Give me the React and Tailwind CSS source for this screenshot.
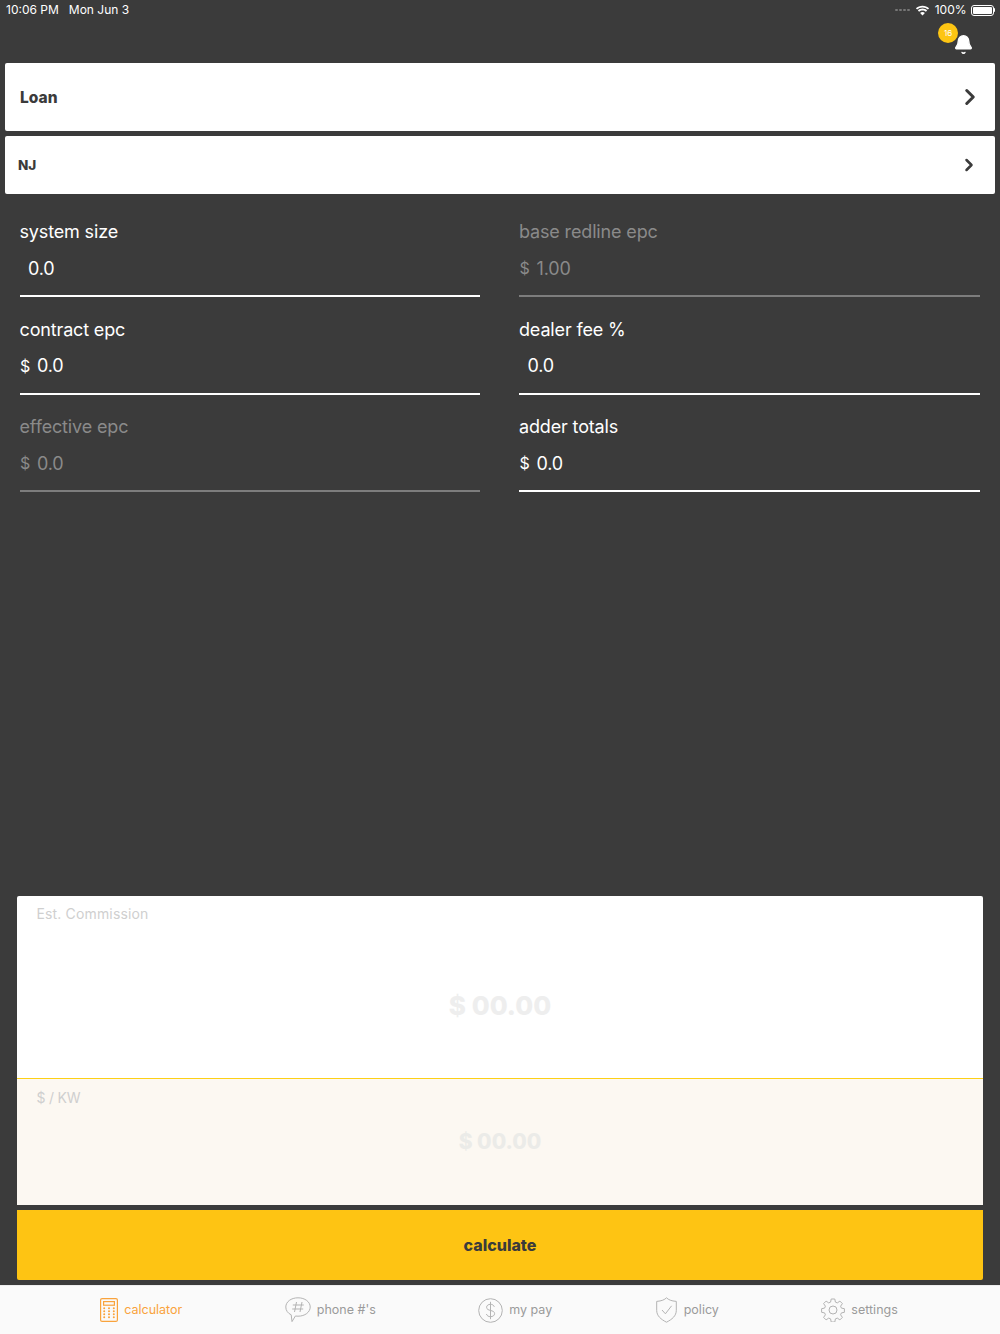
import React from 'react';
import { Bell, ChevronRight } from 'lucide-react';

const FIELDS = [
  { label: 'system size', value: '0.0' },
  { label: 'base redline epc', value: '1.00', prefix: '$', disabled: true },
  { label: 'contract epc', value: '0.0', prefix: '$' },
  { label: 'dealer fee %', value: '0.0' },
  { label: 'effective epc', value: '0.0', prefix: '$', disabled: true },
  { label: 'adder totals', value: '0.0', prefix: '$' },
];

const CalculatorIcon = () => (
  <svg width="18" height="24" viewBox="0 0 18 24" fill="none" stroke="#f9a33c" strokeWidth="1.2">
    <rect x="0.6" y="0.6" width="16.8" height="22.8" rx="1.5" />
    <rect x="3.6" y="3.6" width="10.8" height="3.6" />
    <g fill="#f9a33c" stroke="none">
      {[4.2, 9, 13.8].map((x) =>
        [10.2, 13.2, 16.2, 19.2].map((y) => <circle key={`${x}-${y}`} cx={x} cy={y} r="1" />)
      )}
    </g>
  </svg>
);

const PhoneIcon = () => (
  <svg width="26" height="26" viewBox="0 0 26 26" fill="none" stroke="#b3b3b3" strokeWidth="1">
    <path d="M13 0.8c6.900 0 12.200 4 12.200 9.200s-5.300 9.200-12.200 9.200c-.9 0-1.800-.1-2.600-.2l-3.400 5.600-.8-6.800C2.800 16.300.8 13.400.8 10 .8 4.800 6.100.8 13 .8z" />
    <path d="M11.500 5l-2 10M17 5l-2 10M7.800 8h11M7.200 12h11" />
  </svg>
);

const PayIcon = () => (
  <svg width="25" height="25" viewBox="0 0 25 25" fill="none" stroke="#b3b3b3" strokeWidth="1">
    <circle cx="12.500" cy="12.500" r="11.800" />
    <path d="M16.300 8.800c-.5-1.600-2-2.500-3.800-2.500-2.200 0-3.900 1.200-3.900 3 0 4.200 8 2.200 8 6.300 0 1.900-1.800 3.100-4.100 3.100-2 0-3.600-1-4.100-2.700M12.500 3.800v17.400" />
  </svg>
);

const PolicyIcon = () => (
  <svg width="23" height="26" viewBox="0 0 23 26" fill="none" stroke="#b3b3b3" strokeWidth="1">
    <path d="M11.500 .8c2 2 4.800 3.200 9.800 3.600v9c0 5.500-4.300 9-9.800 11.800C6 22.400 1.700 18.900 1.700 13.400v-9C6.700 4 9.500 2.800 11.500 .8z" />
    <path d="M7 13l3.400 3.800 6.200-8" />
  </svg>
);

const SettingsIcon = () => (
  <svg width="24" height="24" viewBox="0 0 24 24" fill="none" stroke="#b3b3b3" strokeWidth="1">
    <circle cx="12" cy="12" r="4" />
    <path d="M10.200 1h3.600l.6 3.100 1.900.8 2.600-1.800 2.500 2.500-1.800 2.600.8 1.900 3 .6v3.600l-3 .6-.8 1.900 1.800 2.600-2.500 2.500-2.600-1.800-1.900.8-.6 3.100h-3.600l-.6-3.100-1.900-.8-2.600 1.800-2.500-2.500 1.800-2.600-.8-1.900-3-.6v-3.600l3-.6.800-1.900-1.800-2.600 2.500-2.500 2.600 1.800 1.900-.8z" />
  </svg>
);

const WifiIcon = () => (
  <svg width="15" height="11" viewBox="0 0 15 11" fill="white">
    <path d="M7.500 2.500c2.100 0 4 .8 5.400 2.100l1.200-1.300C12.400 1.700 10.100.7 7.500.7S2.600 1.700.9 3.300l1.200 1.300C3.500 3.300 5.400 2.500 7.500 2.500z" />
    <path d="M7.500 5.400c1.300 0 2.500.5 3.400 1.300l1.200-1.300C10.900 4.300 9.300 3.600 7.500 3.600S4.100 4.300 2.900 5.400l1.200 1.300c.9-.8 2.100-1.300 3.400-1.300z" />
    <path d="M7.500 10.500l2.400-2.600c-.6-.6-1.500-1-2.400-1s-1.800.4-2.400 1z" />
  </svg>
);

const TabItem = ({ icon, label, active }) => (
  <div className={`flex items-center gap-[6px] text-[12.5px] ${active ? 'text-[#f9a33c]' : 'text-[#9b9b9b]'}`}>
    {icon}
    <span>{label}</span>
  </div>
);

const Field = ({ label, value, prefix, disabled }) => (
  <div className={`h-[97.5px] ${disabled ? 'text-[#8a8a8a]' : 'text-white'}`}>
    <div className="pt-[14px] text-[18px] leading-[24px]">{label}</div>
    <div className="mt-[11px] flex h-[26px] items-center text-[18px]">
      {prefix ? <span className="ml-[0.5px] w-[17px] text-[16px]">{prefix}</span> : <span className="w-[8.5px]" />}
      <span>{value}</span>
    </div>
    <div className={`mt-[14px] h-[2px] ${disabled ? 'bg-[#7d7d7d]' : 'bg-white'}`} />
  </div>
);

export default function App() {
  return (
    <div className="flex h-[1334px] w-[1000px] flex-col overflow-hidden bg-[#3b3b3b] font-['Inter',sans-serif]">
      {/* status bar */}
      <div className="flex h-[20px] items-center justify-between pl-[6px] pr-[5px] text-[12px] text-white">
        <div className="flex gap-[10px]">
          <span>10:06 PM</span>
          <span>Mon Jun 3</span>
        </div>
        <div className="flex items-center">
          <div className="mr-[5px] flex gap-[1.5px]">
            <span className="h-[2.5px] w-[2.5px] rounded-full bg-[#777]" />
            <span className="h-[2.5px] w-[2.5px] rounded-full bg-[#777]" />
            <span className="h-[2.5px] w-[2.5px] rounded-full bg-[#777]" />
            <span className="h-[2.5px] w-[2.5px] rounded-full bg-[#777]" />
          </div>
          <WifiIcon />
          <span className="ml-[5px]">100%</span>
          <div className="ml-[4px] flex items-center">
            <div className="h-[11px] w-[23px] rounded-[3px] border border-white p-px">
              <div className="h-full w-full rounded-[1px] bg-white" />
            </div>
            <div className="h-[4px] w-[1.5px] rounded-r-sm bg-white" />
          </div>
        </div>
      </div>

      {/* notifications */}
      <div className="flex h-[43px] justify-end pr-[25px]">
        <div className="relative mt-[14px] h-[22px] w-[22px]">
          <Bell className="h-[21px] w-[21px] text-white" fill="white" strokeWidth={1.5} />
          <span className="absolute left-[-15px] top-[-11px] flex h-[20px] w-[20px] items-center justify-center rounded-full bg-[#fdc513] text-[8px] text-white">
            16
          </span>
        </div>
      </div>

      {/* pickers */}
      <div className="mx-[5px] flex h-[68px] items-center justify-between rounded-[2px] bg-white pl-[15px] pr-[12px] text-[15.5px] font-extrabold text-[#3b3b3b]">
        <span className="pt-px">Loan</span>
        <ChevronRight className="h-[26px] w-[26px]" strokeWidth={2.8} />
      </div>
      <div className="mx-[5px] mt-[5px] flex h-[58px] items-center justify-between rounded-[2px] bg-white pl-[13px] pr-[16px] text-[13.5px] font-extrabold text-[#3b3b3b]">
        <span className="pt-px">NJ</span>
        <ChevronRight className="h-[20px] w-[20px]" strokeWidth={3} />
      </div>

      {/* inputs */}
      <div className="mt-[12px] grid grid-cols-[460.5px_460.5px] gap-x-[39px] px-[19.5px] tracking-[-0.15px]">
        {FIELDS.map((f) => (
          <Field key={f.label} {...f} />
        ))}
      </div>

      {/* results */}
      <div className="mt-auto mx-[17px]">
        <div className="relative h-[182px] rounded-t-[2px] bg-white">
          <div className="pl-[19.5px] pt-[9px] text-[14px] leading-[17px] tracking-[0.15px] text-[#cfcfcf]">Est. Commission</div>
          <div className="absolute inset-x-0 top-[95px] text-center text-[26px] font-extrabold leading-[30px] text-[#eeeeee]">
            $ 00.00
          </div>
        </div>
        <div className="relative h-[127px] border-t border-[#fdd017] bg-[#fcf8f2]">
          <div className="pl-[19.5px] pt-[10px] text-[14px] leading-[17px] tracking-[-0.2px] text-[#cfcfcf]">$ / KW</div>
          <div className="absolute inset-x-0 top-[50px] text-center text-[21px] font-extrabold leading-[26px] text-[#ebebe8]">
            $ 00.00
          </div>
        </div>
        <div className="mt-[5px] flex h-[70px] items-center justify-center rounded-b-[2px] bg-[#fec413] text-[16px] font-extrabold text-[#3b3b3b]">
          calculate
        </div>
      </div>

      {/* tab bar */}
      <div className="mt-[5px] flex h-[49px] items-center justify-center gap-[102.5px] border-t border-[#ededed] bg-[#fafafa] pr-[2px]">
        <TabItem active icon={<CalculatorIcon />} label="calculator" />
        <TabItem icon={<PhoneIcon />} label="phone #'s" />
        <TabItem icon={<PayIcon />} label="my pay" />
        <TabItem icon={<PolicyIcon />} label="policy" />
        <TabItem icon={<SettingsIcon />} label="settings" />
      </div>
    </div>
  );
}
